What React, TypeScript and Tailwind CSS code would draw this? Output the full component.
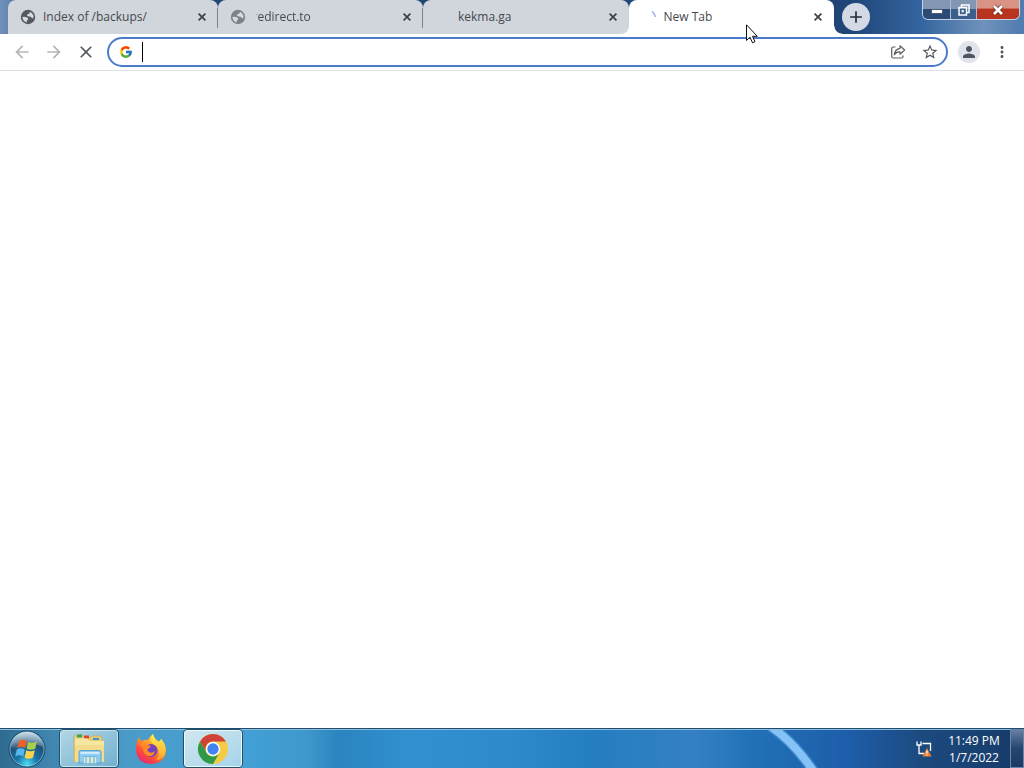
import { useState } from 'react'
import type { ReactNode } from 'react'
import { MdClose, MdAdd, MdArrowBack, MdArrowForward, MdStarBorder, MdPerson, MdMoreVert } from 'react-icons/md'
import { FcGoogle } from 'react-icons/fc'
import clsx from 'clsx'

type Tab = {
    id: number
    title: string
    icon: ReactNode
    fade?: boolean
}

const Spinner = () => (
    <svg viewBox="0 0 16 16" className="w-4 h-4" fill="none">
        <path d="M11 2.5 Q14 4.5 14.6 8" stroke="#a9b9ec" strokeWidth="1.6" />
    </svg>
)

const Globe = ({ color }: { color: string }) => (
    <svg viewBox="0 0 16 16" className="w-4 h-4">
        <circle cx="8" cy="8" r="7.2" fill={color} />
        <path d="M2.400 8Q4.500 7.300 6.500 8.300Q8.500 8.800 8.200 10.500L6.800 11.500V13.600Q3 12.600 2.400 8Z" fill="#d7dadf" />
        <path d="M9.800 2.800Q12.500 3.800 13.500 6.700L13.300 9.500Q11.500 9 10.500 7.800L8 7.300Q6.300 6.500 7.400 5.200L9.500 4.500Z" fill="#d7dadf" />
    </svg>
)

const CloseGlyph = () => (
    <svg viewBox="0 0 8 8" className="w-2 h-2">
        <path d="M0.600 0.600L7.400 7.400M7.400 0.600L0.600 7.400" stroke="#3c4044" strokeWidth="1.700" />
    </svg>
)

const tabs: Tab[] = [
    { id: 1, title: 'Index of /backups/', icon: <Globe color="#55595f" /> },
    { id: 2, title: 'redirect.to', icon: <Globe color="#7f8388" />, fade: true },
    { id: 3, title: 'kekma.ga', icon: null },
    { id: 4, title: 'New Tab', icon: <Spinner /> },
]

const ShareIcon = () => (
    <svg viewBox="0 0 16 16" className="w-4 h-4" fill="none" stroke="#5a5e63" strokeWidth="1.2" strokeLinejoin="round">
        <path d="M5.500 3H3.200Q1.700 3 1.700 4.500V12.500Q1.700 14 3.200 14H11.500Q13 14 13 12.500V11.500" />
        <path d="M10 1.800L14.600 6L10 10.200V7.900Q6.300 7.600 4.300 10.700Q4.800 5.200 10 4.300Z" />
    </svg>
)

const StartOrb = () => (
    <svg viewBox="0 0 38 38" className="w-[38px] h-[38px]">
        <defs>
            <radialGradient id="orb" cx="50%" cy="92%" r="85%">
                <stop offset="0" stopColor="#4fdcf4" />
                <stop offset="0.35" stopColor="#1875a9" />
                <stop offset="0.7" stopColor="#1f5077" />
                <stop offset="1" stopColor="#6c9ab8" />
            </radialGradient>
            <linearGradient id="orbShine" x1="0" y1="0" x2="0" y2="1">
                <stop offset="0" stopColor="#fff" stopOpacity="0.6" />
                <stop offset="1" stopColor="#fff" stopOpacity="0.05" />
            </linearGradient>
        </defs>
        <circle cx="19" cy="19" r="18" fill="url(#orb)" stroke="#1d4564" strokeWidth="1" />
        <circle cx="19" cy="19" r="17" fill="none" stroke="#b5d8e9" strokeOpacity="0.6" />
        <path d="M3 17A16 15 0 0 1 35 17Q27 13 19 17T3 17Z" fill="url(#orbShine)" />
        <path d="M11 11Q15 8.500 18.800 11L17.200 18Q13.500 15.500 9.200 18Z" fill="#ef6029" />
        <path d="M20.200 11.800Q24 14 28.800 11.500L27.200 18.700Q22.500 21 18.600 18.700Z" fill="#a8cf4b" />
        <path d="M8.800 19.400Q13 17.200 16.800 19.400L15.200 26.500Q11.500 24 7.200 26.500Z" fill="#58b7ee" />
        <path d="M18.300 20.200Q22 22.500 26.800 20.200L25.100 27.500Q20.500 30 16.600 27.500Z" fill="#fcd34c" />
    </svg>
)

const FolderIcon = () => (
    <svg viewBox="0 0 34 32" className="w-[34px] h-8">
        <path d="M2 4Q2 2 4 2H10L12 4H19L20 3H28L30 5V28H2Z" fill="#e7cc75" stroke="#c9a957" strokeWidth="0.7" />
        <rect x="5" y="1.500" width="5" height="3" fill="#34a65a" />
        <rect x="12" y="2.500" width="5" height="3" fill="#d64a35" />
        <rect x="21" y="5" width="6" height="2" fill="#458fc9" />
        <path d="M3 5.500H15L18 8H32V29H3Z" fill="#f7e6a1" />
        <path d="M3 12H32V29H3Z" fill="#f3dc8c" />
        <path d="M7 30V19Q7 17.500 9 17.500H27Q29 17.500 29 19V30H24.500V24H11.500V30Z" fill="#8ccdf3" stroke="#4694cb" strokeWidth="0.8" />
        <path d="M8.500 20H27.500" stroke="#e2f6ff" strokeWidth="1.500" />
        <path d="M11.500 24H24.500V30H11.500Z" fill="#d9ecd9" />
        <path d="M14 24V30M18 24V30M22 24V30" stroke="#5ea5d8" strokeWidth="1" />
    </svg>
)

const FirefoxIcon = () => (
    <svg viewBox="0 0 32 32" className="w-8 h-8">
        <defs>
            <linearGradient id="fox" x1="0.8" y1="0.1" x2="0.2" y2="0.95">
                <stop offset="0" stopColor="#ffe94a" />
                <stop offset="0.4" stopColor="#ff9a28" />
                <stop offset="0.7" stopColor="#ff4a3c" />
                <stop offset="1" stopColor="#e52a72" />
            </linearGradient>
            <linearGradient id="flame" x1="0.5" y1="0" x2="0.5" y2="1">
                <stop offset="0" stopColor="#fff052" />
                <stop offset="1" stopColor="#ffa52a" />
            </linearGradient>
        </defs>
        <path d="M2 9Q3 5 4 4Q4.500 7 7 8Q10 6 13 7Q15 3 18 1Q19 6 23 8Q25 9 26 6Q31 11 31 17C31 26 24 31 16 31C7 31 1 25 1 17Q1 12 2 9Z" fill="url(#fox)" />
        <path d="M18 1Q19 6 24 9Q25 8 26 6Q31 12 30 19Q28 27 21 27Q25 23 24 18Q23 13 18 11Q14 7 18 1Z" fill="url(#flame)" />
        <circle cx="16" cy="17.500" r="6.500" fill="#7442bd" />
        <path d="M5 10Q9 8 12 12L16 13Q15 15 12.500 16Q12 18 14 19Q17 21 20 18Q19 24 13 23Q8 21 8 15Z" fill="#ff8b27" />
    </svg>
)

const ChromeIcon = () => (
    <svg viewBox="0 0 32 32" className="w-8 h-8">
        <circle cx="16" cy="16" r="15" fill="#f3cb45" />
        <path d="M3 8.500A15 15 0 0 1 29 8.500H16A7.500 7.500 0 0 0 9.500 19.750Z" fill="#cf4436" />
        <path d="M3 8.500L9.500 19.750A7.500 7.500 0 0 0 22.500 19.750L16 31A15 15 0 0 1 3 8.500Z" fill="#2d9a4b" />
        <circle cx="16" cy="16" r="7.200" fill="#fff" />
        <circle cx="16" cy="16" r="5.700" fill="#4184f0" />
    </svg>
)

const NetworkIcon = () => (
    <svg viewBox="0 0 16 16" className="w-4 h-4" fill="none">
        <path d="M1 0.500V4H5V0.500M3 4V12.500H5M6.500 2.500H14.500V10M5 12.500H8" stroke="#fff" strokeWidth="1.300" />
        <path d="M11 7L15.500 15.500H6.500Z" fill="#ef8130" />
        <path d="M11 9.500V12.500M11 13.500V14.500" stroke="#fff" strokeWidth="1.200" />
    </svg>
)

const App = () => {
    const [activeTab, setActiveTab] = useState(4)
    const [query, setQuery] = useState('')

    return (
        <div className="relative min-h-screen flex flex-col bg-white font-['Open_Sans','Noto_Sans',sans-serif] text-xs overflow-hidden">
            {/* Tab strip */}
            <header className="flex items-start h-[34px] pl-2 pr-1 bg-[linear-gradient(90deg,#6f90bb_0%,#6284af_1%,#1f4870_2%,#1f4577_83%,#3465a0_90%,#6f92bb_96%,#4f7bb0_100%)]">
                <nav className="flex flex-1 min-w-0 h-full max-w-[826px] bg-linear-to-b from-transparent from-50% to-white to-50%">
                    {tabs.map((tab, i) => {
                        const active = tab.id === activeTab
                        return (
                            <div
                                key={tab.id}
                                className={clsx(
                                    'relative flex grow items-center min-w-0 h-full pl-3 pr-[10px] rounded-t-lg',
                                    i === 0 ? 'basis-[26px]' : 'basis-0',
                                    active
                                        ? "bg-white after:content-[''] after:absolute after:left-full after:bottom-0 after:w-2 after:h-2 after:bg-[radial-gradient(circle_at_top_right,transparent_7px,#fff_8px)]"
                                        : 'bg-[#d1d5dc]',
                                    tab.id === activeTab - 1 && 'rounded-br-lg',
                                )}
                            >
                                <button
                                    onClick={() => setActiveTab(tab.id)}
                                    className="flex flex-1 items-center gap-[7px] min-w-0 h-full text-left text-[#45494e]"
                                >
                                    <span className="w-4 h-4 shrink-0">{tab.icon}</span>
                                    <span className={clsx('truncate', tab.fade && 'mask-l-from-[calc(100%-6px)] mask-l-to-[calc(100%-2px)]')}>{tab.title}</span>
                                </button>
                                <button aria-label={`Close ${tab.title}`} className="w-3 h-4 shrink-0 flex items-center justify-center">
                                    <CloseGlyph />
                                </button>
                                {i < tabs.length - 2 && <span className="absolute right-0 top-2 w-px h-5 bg-[#7d828a]" />}
                            </div>
                        )
                    })}
                </nav>
                <button aria-label="New tab" className="mt-[3px] ml-2 w-7 h-7 shrink-0 rounded-full bg-[#d3dae5] flex items-center justify-center">
                    <MdAdd className="w-5 h-5 text-[#272c33]" />
                </button>
                <div className="ml-auto flex shrink-0 h-5 border border-t-0 border-[#c3d2e4] rounded-b-md overflow-hidden text-white">
                    <button aria-label="Minimize" className="w-7 flex justify-center items-center bg-linear-to-b from-[#8197b3] from-45% to-[#2b4b76] to-50% border-r border-[#a9bcd3]">
                        <span className="w-[10px] h-[3px] mt-1 bg-white border border-[#4a5b72] box-content" />
                    </button>
                    <button aria-label="Restore" className="w-[26px] flex justify-center items-center bg-linear-to-b from-[#8197b3] from-45% to-[#3b5f8c] to-50% border-r border-[#a9bcd3]">
                        <svg viewBox="0 0 12 12" className="w-3 h-3" fill="none" stroke="#fff" strokeWidth="1.5">
                            <path d="M3.500 3V1H11V8.500H9" />
                            <rect x="1" y="3.500" width="7.500" height="7.500" />
                            <rect x="4" y="6.500" width="1.500" height="1.500" strokeWidth="0.8" />
                        </svg>
                    </button>
                    <button aria-label="Close" className="w-[42px] flex justify-center items-center bg-linear-to-b from-[#d99384] from-40% to-[#b9341f] to-50%">
                        <svg viewBox="0 0 12 12" className="w-3 h-3">
                            <path d="M2 2L10 10M10 2L2 10" stroke="#6c2f2b" strokeWidth="4" />
                            <path d="M2 2L10 10M10 2L2 10" stroke="#fff" strokeWidth="2.600" />
                        </svg>
                    </button>
                </div>
            </header>

            {/* Toolbar */}
            <div className="flex items-center h-[37px] pl-[6px] pr-2 bg-white border-b border-[#dcdfe3]">
                <button aria-label="Back" className="w-8 flex justify-center text-[#b4b6b9]"><MdArrowBack className="w-5 h-5" /></button>
                <button aria-label="Forward" className="w-8 flex justify-center text-[#b4b6b9]"><MdArrowForward className="w-5 h-5" /></button>
                <button aria-label="Stop" className="w-8 flex justify-center text-[#54585d]"><MdClose className="w-5 h-5" /></button>
                <div className="flex flex-1 items-center h-[30px] ml-[5px] pl-[10px] border-2 border-[#4b7bc9] rounded-full bg-white">
                    <FcGoogle className="w-[14px] h-[14px]" />
                    <span className="ml-[9px] w-px h-5 bg-black" />
                    <input
                        type="text"
                        aria-label="Address and search bar"
                        value={query}
                        onChange={(e) => setQuery(e.target.value)}
                        className="flex-1 min-w-0 h-5 outline-none text-sm"
                    />
                    <button aria-label="Share" className="w-8 flex justify-center"><ShareIcon /></button>
                    <button aria-label="Bookmark" className="w-8 flex justify-center text-[#54585d]"><MdStarBorder className="w-[18px] h-[18px] shrink-0" /></button>
                </div>
                <button aria-label="Profile" className="ml-[10px] w-[22px] h-[22px] rounded-full bg-[#e0e3e9] flex items-center justify-center">
                    <MdPerson className="w-[18px] h-[18px] text-[#4d5560]" />
                </button>
                <button aria-label="Menu" className="ml-2 w-7 flex justify-center text-[#54585d]"><MdMoreVert className="w-[18px] h-[18px]" /></button>
            </div>

            <main className="flex-1 bg-white" />

            {/* Taskbar */}
            <footer className="relative flex items-stretch h-10 border-t border-[#1e4d70] overflow-hidden">
                <div className="absolute inset-0 bg-[linear-gradient(90deg,#2f6b8f_0%,#3f86b0_5%,#4a9cc8_13%,#42a0d4_24%,#3f98cc_30%,#2a84c0_33%,#3290d0_40%,#2e8acb_50%,#247ec0_58%,#3580c4_68%,#2272b8_73%,#1d5da9_83%,#1c4a7f_90%,#163a68_100%)] border-t border-[#8fbfdc]" />
                <svg viewBox="0 0 50 38" className="absolute left-3/4 bottom-0 w-[50px] h-[38px]" fill="none">
                    <path d="M2 -4Q26 12 46 42" stroke="#3c84c8" strokeWidth="11" />
                    <path d="M2 -4Q26 12 46 42" stroke="#84c2f7" strokeWidth="8" />
                </svg>
                <button aria-label="Start" className="relative ml-2 w-[38px] flex items-center justify-center"><StartOrb /></button>
                <button aria-label="Windows Explorer" className="relative ml-[13px] w-[60px] flex items-center justify-center rounded-sm border border-[#225069] bg-linear-to-br from-[#b4d7e5] to-[#6eb0cf] shadow-[inset_0_0_0_1px_#c6e4ef]">
                    <FolderIcon />
                </button>
                <button aria-label="Firefox" className="relative w-16 flex items-center justify-center"><FirefoxIcon /></button>
                <button aria-label="Google Chrome" className="relative w-[60px] flex items-center justify-center rounded-sm border border-[#225069] bg-linear-to-br from-[#d2e7ef] to-[#a3d3e9] shadow-[inset_0_0_0_1px_#edf8fc]">
                    <ChromeIcon />
                </button>
                <div className="relative ml-auto flex items-center text-white">
                    <button aria-label="Network" className="mr-4"><NetworkIcon /></button>
                    <div className="w-[52px] text-center leading-[17px] whitespace-nowrap">
                        <div>11:49 PM</div>
                        <div>1/7/2022</div>
                    </div>
                    <button aria-label="Show desktop" className="ml-[10px] w-[14px] h-full border border-[#6a87aa] bg-linear-to-b from-[#6880a3] via-[#25466f] via-50% to-[#1b3b66]" />
                </div>
            </footer>

            {/* Mouse pointer */}
            <svg viewBox="0 0 12 20" className="absolute left-[746px] top-6 w-3 h-5 pointer-events-none">
                <path d="M0.500 0.800V16.500L4 13.200L6.500 18.800L9 17.700L6.500 12.300H11.300Z" fill="#fff" stroke="#111" strokeWidth="1" />
            </svg>
        </div>
    )
}

export default App
